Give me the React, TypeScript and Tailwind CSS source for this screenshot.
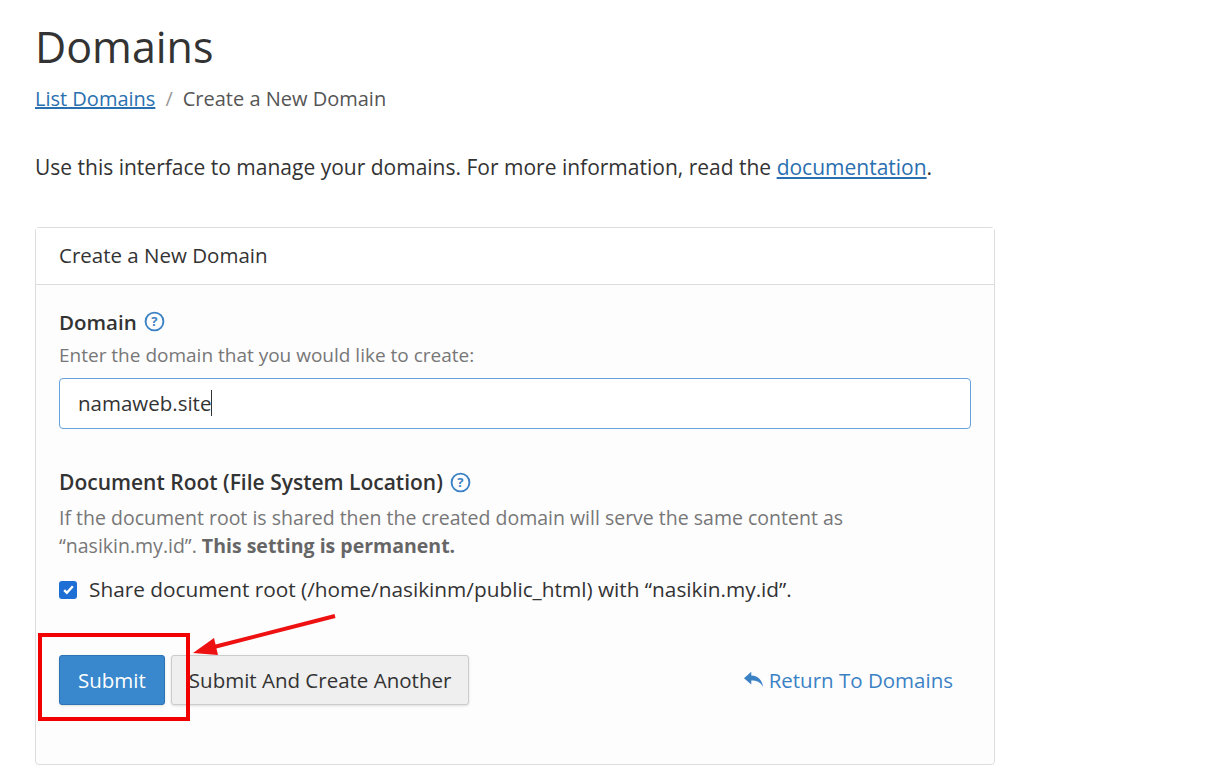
import React from "react";

const Q = () => (
  <svg width="21" height="21" viewBox="0 0 20 20" className="inline-block">
    <circle cx="10" cy="10" r="8.5" fill="none" stroke="#3b82c4" strokeWidth="1.8" />
    <text x="10" y="14.5" textAnchor="middle" fontSize="12.5" fontWeight="700" fill="#3b82c4" fontFamily="Open Sans, sans-serif">?</text>
  </svg>
);

export default function App() {
  return (
    <div className="min-h-[780px] bg-white text-[#333] relative overflow-hidden" style={{ fontFamily: '"Open Sans", sans-serif' }}>
      <div className="pl-[35px] pt-[18px]">
        <h1 className="text-[43px] leading-[58px] text-[#333]">Domains</h1>
        <div className="text-[20px] text-[#555] mt-[8px] flex gap-[10px]">
          <a className="text-[#2a6fb0] underline">List Domains</a>
          <span className="text-[#999]">/</span>
          <span>Create a New Domain</span>
        </div>
        <p className="text-[21px] mt-[38px] text-[#333]">
          Use this interface to manage your domains. For more information, read the{" "}
          <a className="text-[#2a6fb0] underline">documentation</a>.
        </p>
        <div className="mt-[43px] w-[960px] h-[538px] border border-[#ddd] rounded-[4px] bg-[#fdfdfe]">
          <div className="h-[57px] border-b border-[#ddd] bg-white px-[23px] flex items-center text-[20.5px] text-[#333]">Create a New Domain</div>
          <div className="px-[23px] pt-[22px]">
            <div className="flex items-center gap-[7px] text-[20.5px] font-semibold text-[#333]">Domain <Q /></div>
            <div className="text-[19px] text-[#777] mt-[4px]">Enter the domain that you would like to create:</div>
            <div className="mt-[8px] h-[51px] border border-[#66a3dd] rounded-[4px] bg-white flex items-center pl-[18px] text-[20.5px] text-[#333]">
              namaweb.site<span className="inline-block w-px h-[26px] bg-[#333]" />
            </div>
            <div className="mt-[38px] flex items-center gap-[7px] text-[21px] font-semibold text-[#333]">Document Root (File System Location) <Q /></div>
            <div className="text-[19.5px] text-[#777] mt-[6px] leading-[28px]">
              If the document root is shared then the created domain will serve the same content as<br />
              “nasikin.my.id”. <b className="text-[#666]">This setting is permanent.</b>
            </div>
            <div className="mt-[14px] flex items-center gap-[12px] text-[20.8px] text-[#333]">
              <span className="w-[18px] h-[18px] rounded-[3px] bg-[#1d6fd6] flex items-center justify-center">
                <svg width="13" height="13" viewBox="0 0 12 12"><path d="M2 6.5l2.5 2.5L10 3" stroke="white" strokeWidth="2.2" fill="none" /></svg>
              </span>
              Share document root (/home/nasikinm/public_html) with “nasikin.my.id”.
            </div>
            <div className="mt-[50px] flex items-center">
              <button className="h-[50px] px-[18px] bg-[#3987cc] border border-[#2c74b5] rounded-[3px] text-white text-[20.5px] shadow">Submit</button>
              <button className="ml-[6px] h-[50px] px-[17px] bg-[#efefef] border border-[#ccc] rounded-[3px] text-[#333] text-[20.5px] shadow">Submit And Create Another</button>
              <a className="ml-auto mr-[18px] text-[20.5px] text-[#3b82c4] flex items-center gap-[4px]">
                <svg width="22" height="20" viewBox="0 0 24 22"><path d="M9 2L1 9l8 7v-4.5c6 0 10 1.5 13 7-1-7-5-12-13-12.5z" fill="#3b82c4" /></svg>
                Return To Domains
              </a>
            </div>
          </div>
        </div>
      </div>
      <div className="absolute left-[38px] top-[633px] w-[152px] h-[88px] border-[4px] border-[#f20000]" />
      <svg className="absolute left-[190px] top-[610px]" width="150" height="50" viewBox="0 0 150 50">
        <line x1="145" y1="6" x2="20" y2="38" stroke="#ee1111" strokeWidth="4" />
        <polygon points="3,43 24,28 28,45" fill="#ee1111" />
      </svg>
    </div>
  );
}
